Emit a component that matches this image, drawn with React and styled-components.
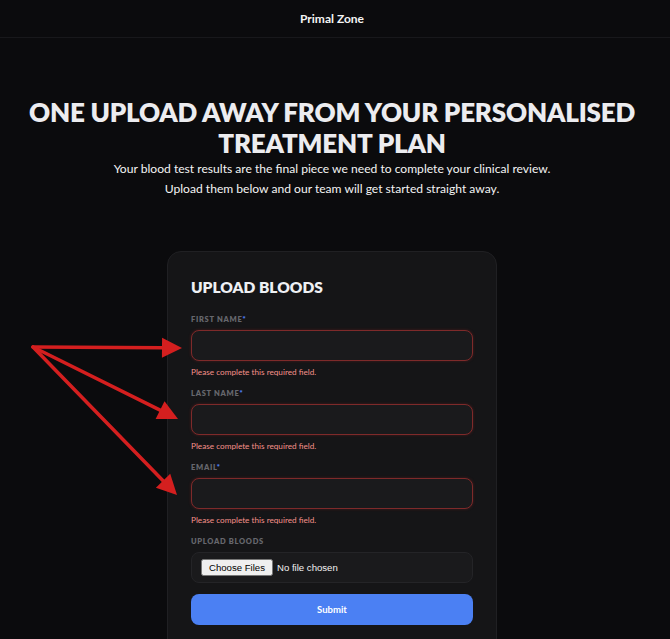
import React from 'react';
import styled, { createGlobalStyle } from 'styled-components';

const GlobalStyle = createGlobalStyle`
  html, body {
    margin: 0;
    padding: 0;
    background: #0b0b0d;
  }
  body {
    font-family: 'Lato', 'Liberation Sans', sans-serif;
    color: #f2f2f2;
  }
  * {
    box-sizing: border-box;
  }
`;

const Page = styled.div`
  position: relative;
  min-height: 639px;
  overflow: hidden;
`;

const Header = styled.header`
  height: 38px;
  display: flex;
  align-items: center;
  justify-content: center;
  border-bottom: 1px solid #18181b;
  font-size: 12px;
  font-weight: 700;
  color: #f4f4f4;
  padding-right: 6px;
`;

// content is centred on a 664px column, as in the shot
const Main = styled.main`
  padding-right: 6px;
`;

const Hero = styled.section`
  display: flex;
  flex-direction: column;
  align-items: center;
  text-align: center;
  padding-top: 59px;
`;

const Title = styled.h1`
  margin: 0;
  font-size: 26px;
  line-height: 31px;
  font-weight: 800;
  text-transform: uppercase;
  color: #ececef;
  letter-spacing: -0.2px;
`;

const Lead = styled.p`
  margin: 0;
  font-size: 12.1px;
  line-height: 20px;
  color: #f4f4f4;
`;

const Card = styled.form`
  width: 330px;
  margin: 52px auto 0;
  padding: 24px 23px 30px;
  background: #151517;
  border: 1px solid #202023;
  border-radius: 14px;
  display: flex;
  flex-direction: column;
`;

const CardTitle = styled.h2`
  margin: 0 0 17px;
  font-size: 15.5px;
  line-height: 22px;
  font-weight: 800;
  color: #eef0f4;
`;

const Group = styled.div`
  display: flex;
  flex-direction: column;
  margin-bottom: 12px;
`;

const Label = styled.label`
  font-size: 7.5px;
  line-height: 10px;
  font-weight: 800;
  letter-spacing: 0.7px;
  text-transform: uppercase;
  color: #66676d;
  margin-bottom: 5px;

  span {
    color: #4c7cf0;
  }
`;

const TextInput = styled.input`
  height: 31px;
  width: 100%;
  border-radius: 8px;
  background: #1a1a1c;
  border: 1px solid ${(p) => (p.$invalid ? '#7e2a2a' : '#29292c')};
  box-shadow: ${(p) => (p.$invalid ? '0 0 3px rgba(170, 40, 40, 0.35)' : 'none')};
  outline: none;
  color: #eee;
  padding: 0 10px;
`;

const ErrorText = styled.div`
  margin-top: 6px;
  font-size: 8.2px;
  line-height: 10px;
  color: #f4908a;
`;

const FileBox = styled.div`
  height: 31px;
  border-radius: 8px;
  background: #1a1a1c;
  border: 1px solid #242427;
  display: flex;
  align-items: center;
  padding-left: 9px;

  input {
    font-family: 'Liberation Sans', Arial, sans-serif;
    font-size: 9.6px;
    color: #f2f2f2;
  }
`;

const SubmitButton = styled.button`
  margin-top: -1px;
  height: 31px;
  border: none;
  border-radius: 8px;
  background: #4b80f3;
  color: #fff;
  font-family: inherit;
  font-size: 9.5px;
  font-weight: 700;
`;

const Arrows = styled.svg`
  position: absolute;
  left: 0;
  top: 0;
  pointer-events: none;
`;

const fields = [
  { id: 'firstname', label: 'First name', type: 'text' },
  { id: 'lastname', label: 'Last name', type: 'text' },
  { id: 'email', label: 'Email', type: 'email' },
];

const arrowTips = [
  { x: 182, y: 348 },
  { x: 178, y: 419 },
  { x: 177, y: 495 },
];

function Arrow({ from, to }) {
  const dx = to.x - from.x;
  const dy = to.y - from.y;
  const len = Math.hypot(dx, dy);
  const ux = dx / len;
  const uy = dy / len;
  const headLen = 20;
  const half = 10;
  const bx = to.x - ux * headLen;
  const by = to.y - uy * headLen;
  const points = [
    `${to.x},${to.y}`,
    `${bx - uy * half},${by + ux * half}`,
    `${bx + uy * half},${by - ux * half}`,
  ].join(' ');
  return (
    <g>
      <line x1={from.x} y1={from.y} x2={bx} y2={by} stroke="#d41f1f" strokeWidth="3.5" strokeLinecap="round" />
      <polygon points={points} fill="#d41f1f" />
    </g>
  );
}

export default function App() {
  const origin = { x: 33, y: 347 };
  return (
    <Page>
      <GlobalStyle />
      <Header>Primal Zone</Header>
      <Main>
        <Hero>
          <Title>
            One upload away from your personalised
            <br />
            treatment plan
          </Title>
          <Lead>Your blood test results are the final piece we need to complete your clinical review.</Lead>
          <Lead>Upload them below and our team will get started straight away.</Lead>
        </Hero>
        <Card onSubmit={(e) => e.preventDefault()}>
          <CardTitle>UPLOAD BLOODS</CardTitle>
          {fields.map((f) => (
            <Group key={f.id}>
              <Label htmlFor={f.id}>
                {f.label}
                <span>*</span>
              </Label>
              <TextInput id={f.id} type={f.type} $invalid />
              <ErrorText>Please complete this required field.</ErrorText>
            </Group>
          ))}
          <Group>
            <Label htmlFor="bloods">Upload bloods</Label>
            <FileBox>
              <input id="bloods" type="file" multiple />
            </FileBox>
          </Group>
          <SubmitButton type="submit">Submit</SubmitButton>
        </Card>
      </Main>
      <Arrows width="670" height="639" viewBox="0 0 670 639">
        {arrowTips.map((tip, i) => (
          <Arrow key={i} from={origin} to={tip} />
        ))}
      </Arrows>
    </Page>
  );
}
